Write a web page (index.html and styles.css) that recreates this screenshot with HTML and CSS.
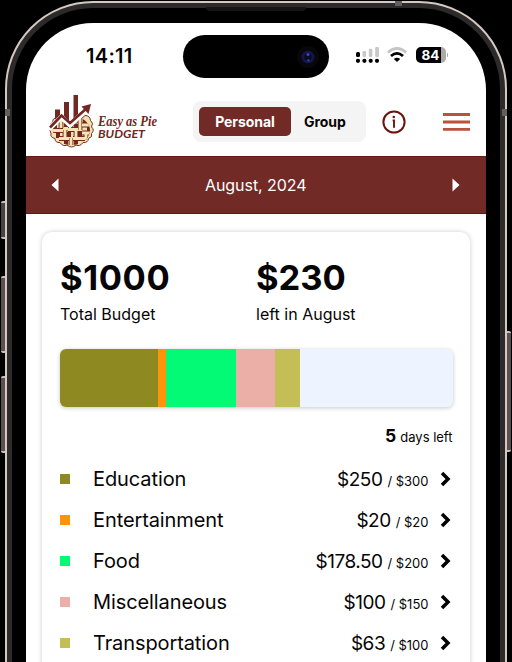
FILE: index.html
```html
<!DOCTYPE html>
<html lang="en">
<head>
<meta charset="utf-8">
<title>Easy as Pie Budget</title>
<link rel="stylesheet" href="styles.css">
</head>
<body>
<div class="device">
  <i class="button silent"></i><i class="button volume-up"></i><i class="button volume-down"></i><i class="button power"></i>
  <div class="frame">
    <i class="speaker"></i><i class="antenna top"></i><i class="antenna left"></i><i class="antenna right"></i>
    <div class="bezel">
      <main class="screen">
        <div class="status">
          <span class="clock">14:11</span>
          <div class="island"><svg width="24" height="24" viewBox="0 0 24 24"><circle cx="12" cy="12" r="11" fill="#08080b"/><circle cx="12" cy="12" r="6.3" fill="#15164a"/><circle cx="12" cy="12" r="3.7" fill="#090a27"/><circle cx="12" cy="9.5" r="1.5" fill="#4648a1"/><circle cx="12.4" cy="15.4" r="1.2" fill="#3b3da0"/></svg></div>
          <div class="indicators">
            <svg class="signal" width="24" height="18" viewBox="0 0 24 18"><g fill="#c8c8ca"><rect x="6.5" y="5" width="3.6" height="6" rx="1.3"/><rect x="12.8" y="2.8" width="3.6" height="8.2" rx="1.3"/><rect x="19.2" y="1" width="3.7" height="10" rx="1.3"/></g><rect x="0" y="6" width="4" height="5" rx="1.5"/><circle cx="2" cy="14.8" r="2.1"/><circle cx="8.4" cy="14.8" r="2.1"/><circle cx="14.7" cy="14.8" r="2.1"/><circle cx="21" cy="14.8" r="2.1"/></svg>
            <svg class="wifi" width="20" height="16" viewBox="0 0 20 16"><path d="M.8 5.500Q10-2.700 19.200 5.500" fill="none" stroke="#c5c5c7" stroke-width="2.500"/><path d="M4 9Q10 3.700 16 9" fill="none" stroke="#000" stroke-width="2.700"/><path d="M6.800 12Q10 9.400 13.200 12L10 15Z"/></svg>
            <span class="battery">84</span>
          </div>
        </div>
        <header class="toolbar">
          <svg class="logo" width="114" height="56" viewBox="0 0 114 56">
            <defs>
              <clipPath id="crust"><ellipse cx="22.500" cy="36.500" rx="18.500" ry="14.500"/></clipPath>
            </defs>
            <path d="M8 24Q3 24 4 28Q0 30 3 33.500Q-.5 36 2 39.500Q1 43.500 6 44.500Q6 49 11 48.500Q14 53 18 51Q22.500 55 27 51Q31 53 34 48.500Q39 49 39.500 44.500Q44 43 42.500 39.500Q46 36 42.500 33Q45 29 41.500 26.500Q41 21.500 36 21.500L22 34L13 23Z" fill="#f4e2ae" stroke="#72302a" stroke-width="1"/>
            <g clip-path="url(#crust)">
              <g fill="#722722"><path d="M3 31h5v4H3zM15 29h5v4h-5zM25 30h4v4h-4zM34 25h4v4h-4zM7 39h4v5H7zM18 38h4v5h-4zM29 37h4v5h-4zM38 32h4v5h-4zM15 46h4v5h-4zM25 46h4v5h-4zM34 43h5v4h-5z"/></g>
              <path d="M3 36.500H14M19 35.500H29M33 31H42M10 44.500H20M24 44.500H36M33 39H42M12 28V34M31 24V36M16 36V44M27 37V45M22 44V51M37 38V46M22 34V37" fill="none" stroke="#722722" stroke-width="4.800"/>
              <path d="M3 36.500H14M19 35.500H29M33 31H42M10 44.500H20M24 44.500H36M33 39H42M12 28V34M31 24V36M16 36V44M27 37V45M22 44V51M37 38V46M22 34V37" fill="none" stroke="#f5e4b4" stroke-width="2.900"/>
            </g>
            <path d="M6 15.500h5v6l-5 5zM15 8h5v19l-5-5zM24.500 1h4.500v21l-4.500 4.500z" fill="#722722"/>
            <path d="M0 35L12.500 23L21 31L38 15" fill="none" stroke="#fff" stroke-width="5"/>
            <path d="M1 33.500L12.500 21.500L21 29L38 14" fill="none" stroke="#722722" stroke-width="2.600"/>
            <path d="M32.500 12.500L42 10L39.500 20Z" fill="#722722"/>
            <text class="script" x="49" y="32" textLength="59" lengthAdjust="spacingAndGlyphs">Easy as Pie</text>
            <text class="wordmark" x="49" y="44" textLength="47" lengthAdjust="spacingAndGlyphs">BUDGET</text>
          </svg>
          <div class="tabs"><span class="tab active">Personal</span><span class="tab">Group</span></div>
          <svg class="info" width="24" height="24" viewBox="0 0 24 24"><circle cx="12" cy="12" r="10.600" fill="none" stroke="#69160f" stroke-width="2"/><path d="M10.600 10.400H12V17.800" fill="none" stroke="#69160f" stroke-width="1.900"/><circle cx="11.800" cy="7" r="1.300" fill="#69160f"/></svg>
          <svg class="menu" width="28" height="20" viewBox="0 0 28 20"><path d="M0 2.500h27M0 10h27M0 17.300h27" stroke="#b9523f" stroke-width="2.800"/></svg>
        </header>
        <nav class="month"><svg width="8" height="14" viewBox="0 0 8 14"><path d="M7.500 .5v13L.5 7z" fill="#fff"/></svg><span>August, 2024</span><svg width="8" height="14" viewBox="0 0 8 14"><path d="M.5 .5v13l7-6.500z" fill="#fff"/></svg></nav>
        <section class="card">
          <div class="totals">
            <div><strong>$1000</strong><span>Total Budget</span></div>
            <div><strong class="left">$230</strong><span>left in August</span></div>
          </div>
          <div class="bar"><i class="education"></i><i class="entertainment"></i><i class="food"></i><i class="misc"></i><i class="transport"></i></div>
          <p class="days"><b>5</b> days left</p>
          <ul>
            <li><i class="education"></i><span class="name">Education</span><span class="amount">$250</span><small>/ $300</small><svg width="12" height="16" viewBox="0 0 12 16"><path d="M2 2l6 6-6 6"/></svg></li>
            <li><i class="entertainment"></i><span class="name">Entertainment</span><span class="amount">$20</span><small>/ $20</small><svg width="12" height="16" viewBox="0 0 12 16"><path d="M2 2l6 6-6 6"/></svg></li>
            <li><i class="food"></i><span class="name">Food</span><span class="amount">$178.50</span><small>/ $200</small><svg width="12" height="16" viewBox="0 0 12 16"><path d="M2 2l6 6-6 6"/></svg></li>
            <li><i class="misc"></i><span class="name">Miscellaneous</span><span class="amount">$100</span><small>/ $150</small><svg width="12" height="16" viewBox="0 0 12 16"><path d="M2 2l6 6-6 6"/></svg></li>
            <li><i class="transport"></i><span class="name">Transportation</span><span class="amount">$63</span><small>/ $100</small><svg width="12" height="16" viewBox="0 0 12 16"><path d="M2 2l6 6-6 6"/></svg></li>
          </ul>
        </section>
      </main>
    </div>
  </div>
</div>
</body>
</html>
```
FILE: styles.css
```css
* { box-sizing: border-box; }
body { margin: 0; background: #000; color: #050505; font-family: Inter, sans-serif; }
.device { position: relative; width: 512px; height: 662px; padding: 1px 5px 0; overflow: hidden; }
.frame { position: relative; height: 800px; border: 2px solid #d5c8c2; border-radius: 88px; padding: 5px; background: #2c2a2b; }
.bezel { height: 790px; padding: 14.5px 14.5px 0 14px; border-radius: 81px; background: #000; }
.screen { height: 760px; background: #fff; border-radius: 67px; overflow: hidden; }
.speaker { position: absolute; top: 4px; left: 199px; width: 100px; height: 4px; border-radius: 0 0 4px 4px; background: #171617; }
.antenna { position: absolute; background: #625f60; }
.antenna.top { left: 388px; top: -2px; width: 7px; height: 5px; }
.antenna.left { left: -2px; top: 106px; width: 5px; height: 7px; }
.antenna.right { right: -2px; top: 106px; width: 5px; height: 7px; }
.button { position: absolute; left: 1px; width: 4px; background: #5a504d; border: solid #c9bdb6; border-width: 2px 0; border-radius: 2px 0 0 2px; }
.silent { top: 201px; height: 38px; background: #444; }
.volume-up { top: 276px; height: 77px; }
.volume-down { top: 376px; height: 77px; }
.power { left: 507px; top: 331px; height: 121px; border-radius: 0 2px 2px 0; }
.status { display: flex; height: 72px; padding: 13px 37px 0 60px; align-items: flex-start; }
.clock { width: 97px; padding-top: 7px; font-size: 20px; line-height: 27px; font-weight: 600; letter-spacing: .3px; }
.island { width: 146px; height: 43px; margin-top: -.5px; border-radius: 22px; background: #000; display: flex; justify-content: flex-end; align-items: center; padding-right: 9px; }
.indicators { display: flex; margin-left: 27px; padding-top: 11px; align-items: flex-start; }
.signal { margin-top: -.5px; }
.wifi { margin-left: 7px; }
.battery { position: relative; width: 30px; height: 16px; margin-left: 9px; border-radius: 5px; background: linear-gradient(90deg,#000 25px,#aaa 25px); color: #fff; font-size: 13.5px; line-height: 16px; font-weight: 700; padding-left: 5.5px; }
.battery::after { content: ""; position: absolute; right: -2px; top: 6px; width: 1.5px; height: 4px; background: #aaa; border-radius: 0 2px 2px 0; }
.toolbar { display: flex; align-items: center; height: 61px; padding: 0 0 7px 23px; }
.logo { flex: none; margin-top: 1px; overflow: visible; }
.script { font: italic bold 15px "Liberation Serif", serif; fill: #722722; }
.wordmark { font: italic bold 10.5px Lato, sans-serif; fill: #722722; }
.tabs { display: flex; flex: none; width: 172.5px; height: 41px; margin-left: 30px; padding: 6px; background: #f4f4f4; border-radius: 8px; }
.tab { font-size: 14px; font-weight: 700; line-height: 29px; margin-left: 13px; letter-spacing: -.05px; }
.tab.active { margin-left: 0; width: 92px; border-radius: 5px; background: #722a26; color: #fff; text-align: center; }
.info { flex: none; margin-left: 16px; }
.menu { flex: none; margin-left: 37px; }
.month { display: flex; align-items: center; justify-content: space-between; height: 58.5px; padding: 0 25px; background: #722a26; border-top: 1px solid #6c1713; border-bottom: 1px solid #651611; color: #fff; font-size: 16px; letter-spacing: -.05px; }
.card { height: 550px; margin: 18px 15.5px 0 16px; padding: 24.5px 17px 0 17.5px; border-radius: 10px; box-shadow: 0 0 5px rgba(0,0,0,.2); }
.totals { display: grid; grid-template-columns: 196px 1fr; padding-left: .5px; height: 92px; }
.totals strong { display: block; font-size: 34.5px; line-height: 42px; letter-spacing: .6px; }
.totals .left { letter-spacing: 0; }
.totals span { display: block; margin-top: 4.5px; font-size: 16px; line-height: 22px; }
.bar { display: flex; height: 58.5px; overflow: hidden; border-radius: 6px; background: #edf4ff; box-shadow: 0 1px 4px rgba(0,0,0,.22); }
.education { background: #8f8922; }
.entertainment { background: #ff940a; }
.food { background: #03fa75; }
.misc { background: #ebafa8; }
.transport { background: #c4be56; }
.bar .education { width: 98.5px; }
.bar .entertainment { width: 7.5px; }
.bar .food { width: 70px; }
.bar .misc { width: 39.5px; }
.bar .transport { width: 24.5px; }
.days { height: 24px; margin: 16.5px .5px 11px; font-size: 13px; line-height: 24px; text-align: right; }
.days b { font-size: 17.5px; margin-right: .5px; }
ul { list-style: none; padding: 0; margin: 0; }
li { display: flex; align-items: baseline; height: 41px; line-height: 41px; }
li i { align-self: center; width: 10px; height: 10px; flex: none; }
.name { margin-left: 23.5px; margin-right: auto; font-size: 20px; letter-spacing: -.1px; }
.amount { font-size: 19px; letter-spacing: -.5px; }
small { margin-left: 5px; font-size: 13px; }
li svg { align-self: center; margin-left: 11.5px; margin-right: 1px; }
li path { fill: none; stroke: #000; stroke-width: 3.5; }
```
